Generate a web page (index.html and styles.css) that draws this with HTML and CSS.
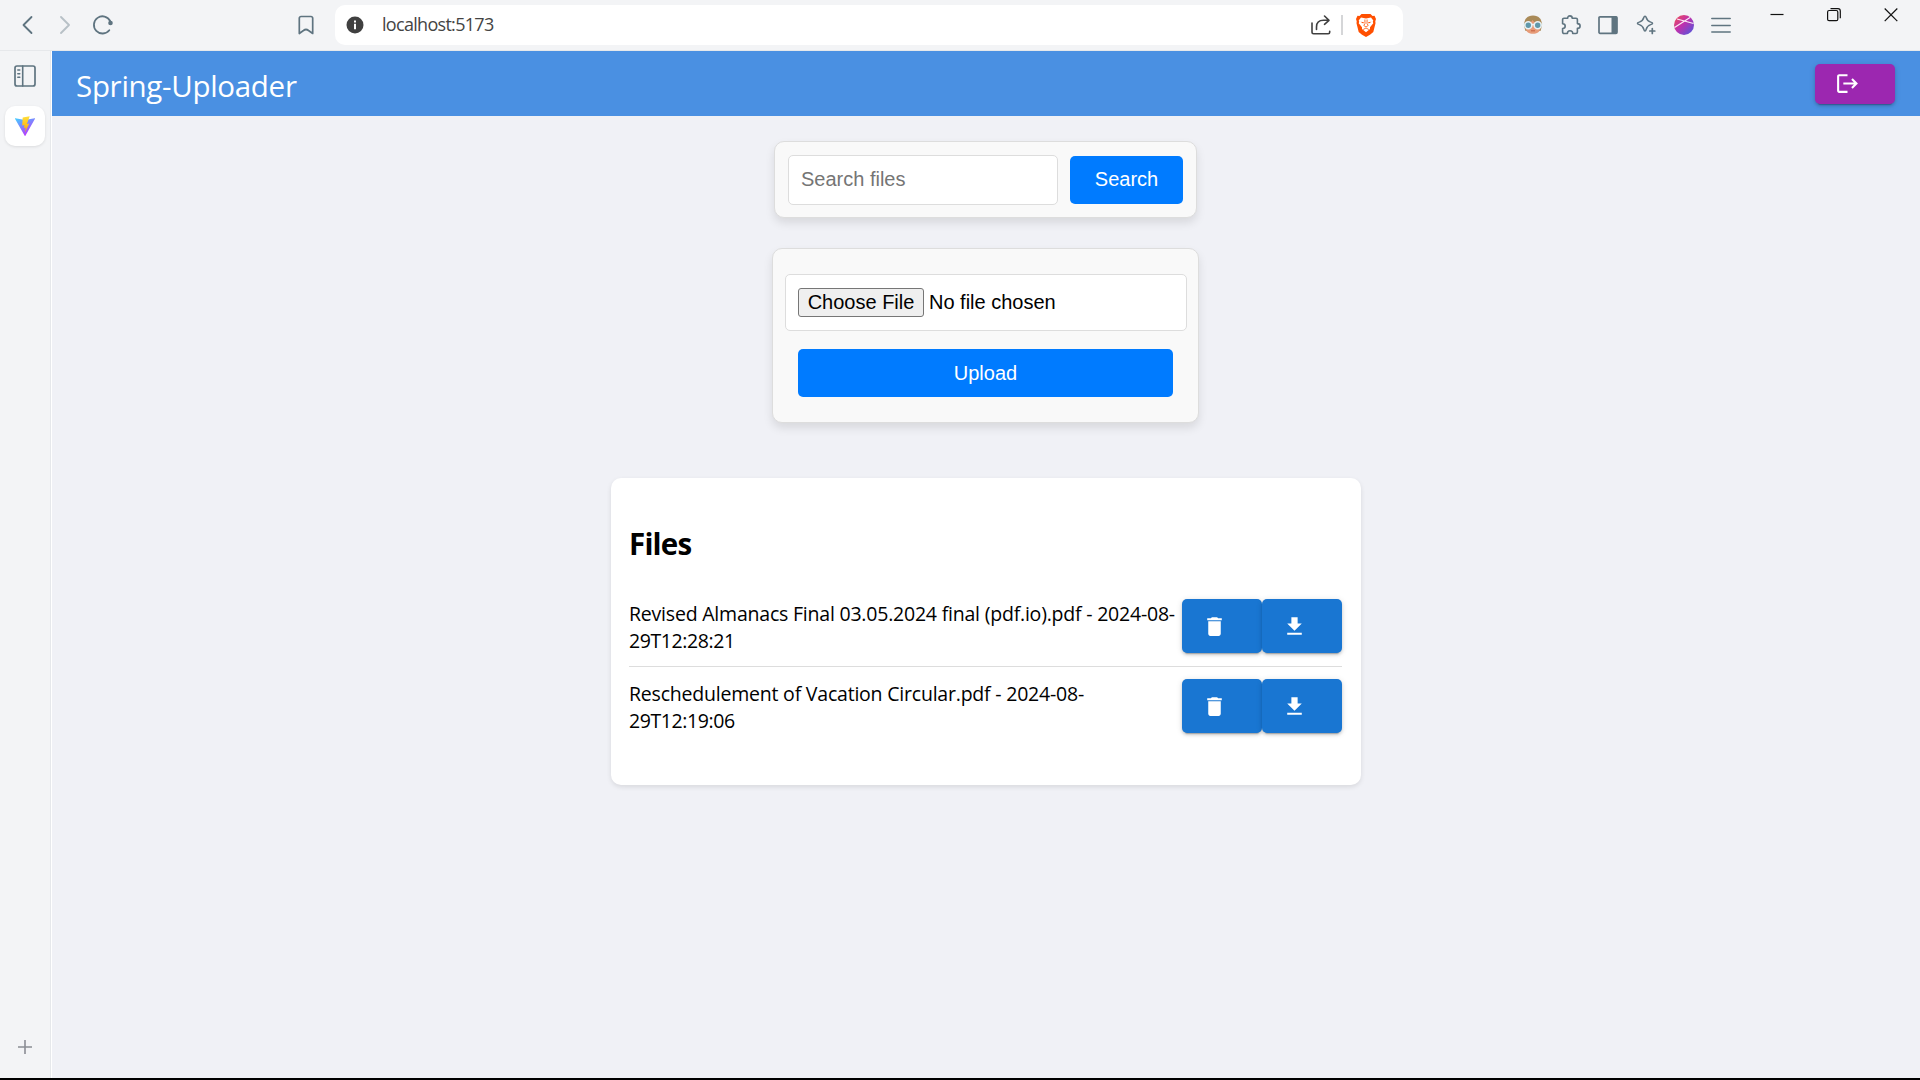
FILE: index.html
```html
<!DOCTYPE html>
<html lang="en">
<head>
<meta charset="utf-8">
<title>Spring-Uploader</title>
<link rel="stylesheet" href="styles.css">
</head>
<body>
<div class="window">
  <header class="toolbar">
    <div class="nav">
      <svg class="ic" width="28" height="28" viewBox="0 0 28 28"><path d="M17.500 6 9.500 14l8 8" stroke-width="1.800"/></svg>
      <svg class="ic dim" width="28" height="28" viewBox="0 0 28 28"><path d="m10 6 8 8-8 8" stroke-width="1.800"/></svg>
      <svg class="ic reload" width="28" height="28" viewBox="0 0 28 28"><path d="M21.200 10A8.600 8.600 0 1 0 20.300 19.200" stroke-width="1.800"/><circle cx="21.500" cy="12" r="2.300" fill="#5f7480" stroke="none"/></svg>
    </div>
    <svg class="ic bookmark" width="20" height="24" viewBox="0 0 20 24"><path d="M5 3.500h10a1.700 1.700 0 0 1 1.700 1.700V20.500L12.500 17.500a4 4 0 0 0-5 0L3.300 20.500V5.200A1.700 1.700 0 0 1 5 3.500z" stroke-width="1.700"/></svg>
    <div class="address">
      <svg class="info" width="18" height="18" viewBox="0 0 18 18"><circle cx="9" cy="9" r="8.500" fill="#404040"/><path d="M8 4.500h2v2H8zM8 7.700h2v5.600H8z" fill="#fff"/></svg>
      <span class="url">localhost:5173</span>
      <svg class="share" width="22" height="22" viewBox="0 0 22 22"><path d="M2 9v9.200a1.500 1.500 0 0 0 1.500 1.500h14.700a1.500 1.500 0 0 0 1.500-1.500v-1M6.500 15.500V13c0-4 2.500-6.700 7-6.700h4.500M14.500 2l4.500 4.300-4.500 4"/></svg>
      <i class="divider"></i>
      <svg class="brave" width="20" height="23" viewBox="0 0 20 23"><path d="M5.500 0h9l2 2 2-.2L20 5l-.7 2.200.2 2L17.300 18 14 20.700 10 23l-4-2.300L2.700 18 .5 9.200l.2-2L0 5l1.500-3.200 2 .2z" fill="#ff4f00"/><path d="M7.500 4 5 3.600 2.700 6.500l.5 1.300-.5 1.500 3.300 4v1.800L10 18.300l4-3.200v-1.800l3.300-4-.5-1.500.5-1.300L15 3.600 12.500 4 10 4.500z" fill="#fff"/><path d="M4.500 7.700 8 8.300l-.8 1.200zM15.500 7.700 12 8.300l.8 1.200z" fill="#ff4f00"/><path d="M8.900 5.500 9 9.500l-1.200 2L10 13l2.200-1.500-1.200-2 .1-4M7.200 15.500 10 14l2.800 1.500" fill="none" stroke="#ff4f00" stroke-width=".8"/></svg>
    </div>
    <div class="extensions">
      <svg width="20" height="20" viewBox="0 0 20 20"><path d="M1 11C1 4 4 .5 10 .5S19 4 19 11l-1.500 5h-15z" fill="#a98a58"/><path d="M3 9C7 8.500 8 7 9.500 5c1.500 2 3.500 3.500 7.500 4v5c0 3-3 4.800-7 4.800S3 17 3 14z" fill="#e79b78"/><circle cx="5.300" cy="10.300" r="3.500" fill="#5f98aa" stroke="#e8f1f4" stroke-width="1.600"/><circle cx="14.700" cy="10.300" r="3.500" fill="#5f98aa" stroke="#e8f1f4" stroke-width="1.600"/><path d="M9 9.500h2M0 9h1.500m17 0H20" stroke="#e8f1f4" stroke-width="1.600"/><path d="M8 15.800h4" stroke="#c4603f"/></svg>
      <svg class="ic" width="20" height="20" viewBox="0 0 20 20"><path d="M3 3.200h3.700C6.700 1.700 7.400.9 8.900.9s2.300.8 2.300 2.300H15a1.400 1.400 0 0 1 1.400 1.400v4c1.700 0 2.700.8 2.700 2.300s-1 2.400-2.700 2.400v3.800a1.400 1.400 0 0 1-1.400 1.400h-3.300c0-1.700-.8-2.800-2.700-2.800s-2.600 1.100-2.600 2.800H3a1.400 1.400 0 0 1-1.400-1.400v-3.500c1.500 0 2.600-.9 2.600-2.500S3.100 8.700 1.600 8.700V4.600A1.400 1.400 0 0 1 3 3.200z" stroke-width="1.600"/></svg>
      <svg class="ic" width="20" height="20" viewBox="0 0 20 20"><rect x="1" y="1.800" width="18" height="16.500" rx="1" stroke-width="1.700"/><path d="M13.500 1.500h5.500v17h-5.500z" fill="#5f7480" stroke="none"/></svg>
      <svg class="ic" width="20" height="20" viewBox="0 0 20 20"><path d="M9 1.200c.7 0 1 .6 1.200 1.300.8 3 1.500 3.700 4.500 4.600 2.500.7 2.500 1.800 0 2.500-3 .9-3.700 1.600-4.500 4.600-.6 2.500-1.800 2.500-2.400 0-.8-3-1.500-3.700-4.500-4.600-2.500-.7-2.500-1.800 0-2.500 3-.9 3.700-1.600 4.500-4.600.2-.7.500-1.300 1.200-1.300z" stroke-width="1.500"/><path d="M16.300 13.500v5M13.800 16h5" stroke-width="1.700"/></svg>
      <svg width="20" height="20" viewBox="0 0 20 20"><defs><linearGradient id="orb" x1="0" y1="0" x2="1" y2="1"><stop offset="0" stop-color="#f2504c"/><stop offset=".45" stop-color="#c030ad"/><stop offset="1" stop-color="#445be2"/></linearGradient></defs><circle cx="10" cy="10" r="10" fill="url(#orb)"/><path d="M.5 12.500 16 2.500M3 4l16.500 4.500" stroke="#fbe9f6" stroke-width="1.200"/></svg>
      <svg class="ic" width="20" height="20" viewBox="0 0 20 20"><path d="M.8 3.500h18.400M.8 10.500h18.400M.8 17h18.400" stroke-width="1.500"/></svg>
    </div>
    <div class="controls">
      <svg width="14" height="14" viewBox="0 0 14 14"><path d="M.5 6.500h13"/></svg>
      <svg width="14" height="14" viewBox="0 0 14 14"><rect x=".6" y="2.500" width="10.200" height="10.200" rx="1.500"/><path d="M3.500.6h7.500a2.300 2.300 0 0 1 2.300 2.300V10.200"/></svg>
      <svg width="14" height="14" viewBox="0 0 14 14"><path d="m.7.500 12.600 12.600M13.300.500.700 13.100"/></svg>
    </div>
  </header>
  <div class="body">
    <aside class="sidebar">
      <svg class="ic panel" width="22" height="22" viewBox="0 0 22 22"><rect x="1" y="1" width="20" height="20" rx="2" stroke-width="1.700"/><path d="M8.700 1v20" stroke-width="1.600"/><path d="M3.800 5h2M3.800 8.700h2M3.800 12.300h2" stroke-width="1.500"/></svg>
      <div class="tab">
        <svg width="20" height="20" viewBox="0 0 20 20"><defs><linearGradient id="vee" x1="0" y1="0" x2=".6" y2="1"><stop offset="0" stop-color="#41d1ff"/><stop offset="1" stop-color="#bd34fe"/></linearGradient><linearGradient id="bolt" x1="0" y1="0" x2="0" y2="1"><stop offset="0" stop-color="#ffdf3a"/><stop offset="1" stop-color="#ffa800"/></linearGradient></defs><path d="M.3 2.200 10 4l9.700-1.800c.3 0 .4.200.3.500L10.400 19.700c-.1.300-.5.300-.7 0L0 2.700c-.1-.3 0-.5.300-.5z" fill="url(#vee)"/><path d="m14.700.2-7 1.300-.5 8 2.300-.4-.6 3 1.900-.5-.9 5 4.400-9-2.400.4z" fill="url(#bolt)"/></svg>
      </div>
      <svg class="plus" width="14" height="14" viewBox="0 0 14 14"><path d="M0 7h14M7 0v14"/></svg>
    </aside>
    <main class="page">
      <div class="appbar">
        <span class="brand">Spring-Uploader</span>
        <button class="btn logout" aria-label="Logout"><svg width="25" height="25" viewBox="0 0 24 24"><path d="m17 7-1.410 1.410L18.170 11H8v2h10.170l-2.580 2.580L17 17l5-5zM4 5h8V3H4c-1.100 0-2 .9-2 2v14c0 1.100.9 2 2 2h8v-2H4z"/></svg></button>
      </div>
      <div class="card search">
        <input class="query" type="text" placeholder="Search files">
        <button class="primary find">Search</button>
      </div>
      <div class="card upload">
        <input class="picker" type="file">
        <button class="primary send">Upload</button>
      </div>
      <section class="files">
        <h2 class="heading">Files</h2>
        <div class="row">
          <div class="name"><span>Revised Almanacs Final 03.05.2024 final (pdf.io).pdf - 2024-08-</span><br><span class="time">29T12:28:21</span></div>
          <button class="btn" aria-label="Delete"><svg width="25" height="25" viewBox="0 0 24 24"><path d="M6 19c0 1.100.9 2 2 2h8c1.100 0 2-.9 2-2V7H6zM19 4h-3.500l-1-1h-5l-1 1H5v2h14z"/></svg></button>
          <button class="btn" aria-label="Download"><svg width="25" height="25" viewBox="0 0 24 24"><path d="M5 20h14v-2H5zM19 9h-4V3H9v6H5l7 7z"/></svg></button>
        </div>
        <div class="row last">
          <div class="name"><span>Reschedulement of Vacation Circular.pdf - 2024-08-</span><br><span class="time">29T12:19:06</span></div>
          <button class="btn" aria-label="Delete"><svg width="25" height="25" viewBox="0 0 24 24"><path d="M6 19c0 1.100.9 2 2 2h8c1.100 0 2-.9 2-2V7H6zM19 4h-3.500l-1-1h-5l-1 1H5v2h14z"/></svg></button>
          <button class="btn" aria-label="Download"><svg width="25" height="25" viewBox="0 0 24 24"><path d="M5 20h14v-2H5zM19 9h-4V3H9v6H5l7 7z"/></svg></button>
        </div>
      </section>
    </main>
  </div>
</div>
</body>
</html>
```
FILE: styles.css
```css
* { box-sizing: border-box; }
body { margin: 0; font-family: "Segoe UI", "Open Sans", sans-serif; background: #f3f4f6; }
button, input { margin: 0; font: 20px "Liberation Sans", Arial, sans-serif; }
svg { display: block; flex: none; }
.ic { fill: none; stroke: #5f7480; stroke-linecap: round; stroke-linejoin: round; }
.dim { opacity: .4; }

.window { display: flex; flex-direction: column; width: 1920px; height: 1080px; overflow: hidden; border-bottom: 2px solid #000; }
.toolbar { display: flex; height: 51px; flex: none; padding-left: 14px; background: #f3f4f6; border-bottom: 1px solid #e6e8eb; }
.nav { display: flex; gap: 9px; padding-top: 11px; }
.reload { margin-left: 1px; }
.bookmark { margin: 13px 0 0 179px; }
.address { display: flex; width: 1068px; height: 40px; margin: 5px 0 0 19px; padding-left: 11px; background: #fff; border-radius: 10px; }
.info { margin-top: 11px; }
.url { width: 946px; padding-left: 18px; font-size: 18px; line-height: 39px; letter-spacing: -.7px; color: #444; }
.share { margin-top: 9px; fill: none; stroke: #404040; stroke-width: 1.6; stroke-linecap: round; stroke-linejoin: round; }
.divider { width: 2px; height: 20px; margin: 10px 13px 0 9px; background: #d5d6d8; }
.brave { margin-top: 9px; }
.extensions { display: flex; gap: 17.700px; margin: 15px 0 0 120px; }
.controls { display: flex; gap: 43px; margin: 8px 0 0 39px; fill: none; stroke: #111; stroke-width: 1.2; }

.body { display: flex; flex: 1; }
.sidebar { display: flex; flex-direction: column; width: 52px; padding: 14px 0 24px; background: #f3f4f6; border-right: 1px solid #fff; box-shadow: inset -1px 0 #e6e8eb; }
.panel { margin-left: 14px; }
.tab { display: grid; place-items: center; width: 40px; height: 40px; margin: 19px 0 0 5px; background: #fff; border-radius: 10px; box-shadow: 0 1px 3px rgba(0, 0, 0, .1); }
.plus { margin: auto 0 0 18px; stroke: #8b8d94; stroke-width: 1.6; }

.page { display: flex; flex-direction: column; align-items: center; flex: 1; background: #f0f1f6; }
.appbar { display: flex; justify-content: space-between; align-items: center; width: 100%; height: 65px; padding: 0 25px 0 24px; background: #4a90e2; }
.brand { padding-top: 4px; font-size: 29.500px; line-height: 40px; letter-spacing: -.3px; color: #fff; }
.btn { display: flex; align-items: center; flex: none; width: 80px; height: 54px; padding: 0 0 0 20px; background: #1976d2; border: 0; border-radius: 5px; fill: #fff; box-shadow: 0 4px 1px -3px rgba(0, 0, 0, .2), 0 2px 3px rgba(0, 0, 0, .14), 0 1px 6px rgba(0, 0, 0, .12); }
.logout { height: 40px; background: #9c27b0; }

.card { margin-right: 1px; background: #f9f9f9; border: 1px solid #ddd; border-radius: 10px; box-shadow: 0 5px 10px rgba(0, 0, 0, .1); }
.search { display: flex; align-items: center; width: 423px; height: 77px; margin-top: 25px; padding: 0 13px; gap: 12px; }
.query { width: 270px; height: 50px; padding: 0 12px; border: 1px solid #ddd; border-radius: 5px; background: #fff; }
.query::placeholder { color: #757575; }
.primary { height: 48px; border: 0; border-radius: 5px; background: #007bff; color: #fff; }
.find { width: 113px; }
.upload { display: flex; flex-direction: column; align-items: flex-start; width: 427px; height: 175px; margin-top: 30px; padding: 25px 0 0 12px; }
.picker { width: 402px; height: 57px; padding: 13px 12px; border: 1px solid #ddd; border-radius: 5px; background: #fff; color: #000; }
.picker::file-selector-button { width: 126px; height: 29px; margin: 0 5px 0 0; padding: 0; font: inherit; border: 1px solid #767676; border-radius: 3px; background: #efefef; color: #000; }
.send { width: 375px; margin: 18px 0 0 13px; }

.files { width: 750px; height: 307px; margin-top: 55px; padding: 46px 19px 0 18px; background: #fff; border-radius: 10px; box-shadow: 0 2px 5px rgba(0, 0, 0, .1); }
.heading { margin: 0 0 25px; font-size: 29.500px; line-height: 40px; font-weight: 700; letter-spacing: -.8px; color: #000; }
.row { display: flex; height: 78px; padding-top: 10px; border-bottom: 1px solid #ddd; }
.last { padding-top: 12px; border: 0; }
.name { width: 553px; padding-top: 1px; font-size: 19.500px; line-height: 27px; letter-spacing: -.21px; white-space: nowrap; color: #000; }
.time { letter-spacing: -.4px; }
```
